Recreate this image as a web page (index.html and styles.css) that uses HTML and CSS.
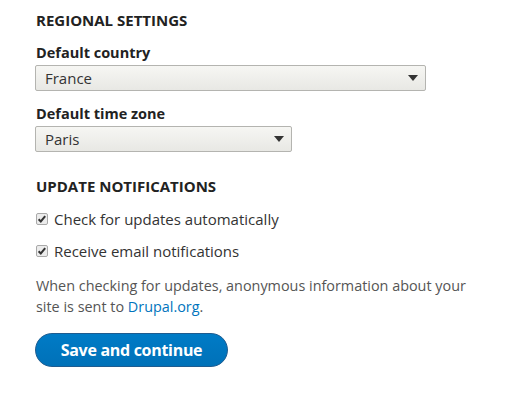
FILE: index.html
```html
<!DOCTYPE html>
<html>
<head>
<meta charset="utf-8">
<link rel="stylesheet" href="styles.css">
</head>
<body>
<form class="form">
  <section class="group">
    <h2 class="group-title">REGIONAL SETTINGS</h2>
    <div class="field">
      <label class="field-label">Default country</label>
      <div class="select select-wide">
        <span class="select-value">France</span>
        <span class="select-arrow"></span>
      </div>
    </div>
    <div class="field">
      <label class="field-label">Default time zone</label>
      <div class="select select-narrow">
        <span class="select-value">Paris</span>
        <span class="select-arrow"></span>
      </div>
    </div>
  </section>
  <section class="group group-updates">
    <h2 class="group-title">UPDATE NOTIFICATIONS</h2>
    <div class="check">
      <svg class="check-box" width="12" height="12" viewBox="0 0 12 12"><rect x="0.5" y="0.5" width="11" height="11" rx="1.5" fill="#ececec" stroke="#a9a9a9"/><path d="M2.6 6.2 L4.8 8.4 L9.2 3.2" fill="none" stroke="#333" stroke-width="2"/></svg>
      <span class="check-label">Check for updates automatically</span>
    </div>
    <div class="check">
      <svg class="check-box" width="12" height="12" viewBox="0 0 12 12"><rect x="0.5" y="0.5" width="11" height="11" rx="1.5" fill="#ececec" stroke="#a9a9a9"/><path d="M2.6 6.2 L4.8 8.4 L9.2 3.2" fill="none" stroke="#333" stroke-width="2"/></svg>
      <span class="check-label">Receive email notifications</span>
    </div>
    <p class="description">When checking for updates, anonymous information about your site is sent to <a class="link" href="#">Drupal.org</a>.</p>
  </section>
  <div class="actions">
    <button type="button" class="button-primary">Save and continue</button>
  </div>
</form>
</body>
</html>
```
FILE: styles.css
```css
html, body {
  margin: 0;
  padding: 0;
  background: #fff;
}
body {
  font-family: "Open Sans", "DejaVu Sans", sans-serif;
  color: #222;
}
.form {
  padding: 10px 0 0 35px;
  width: 450px;
}
.group-title {
  margin: 0 0 0 1px;
  font-size: 15px;
  font-weight: 700;
  line-height: 20px;
  color: #222;
}
.field {
  margin-top: 13px;
}
.field + .field {
  margin-top: 13px;
}
.field-label {
  display: block;
  margin-left: 1px;
  font-size: 14.5px;
  font-weight: 700;
  line-height: 20px;
  color: #222;
}
.select {
  margin-top: 2px;
  box-sizing: border-box;
  height: 26px;
  display: flex;
  align-items: center;
  justify-content: space-between;
  padding: 0 6px 0 9px;
  border: 1px solid #b4b4b0;
  border-radius: 2px;
  background: linear-gradient(#f6f6f3, #e8e8e4);
  font-size: 15px;
  color: #333;
}
.select-wide { width: 391px; }
.select-narrow { width: 257px; }
.select-arrow {
  width: 0;
  height: 0;
  border-left: 5px solid transparent;
  border-right: 5px solid transparent;
  border-top: 6px solid #333;
  margin-right: 1px;
}
.group-updates {
  margin-top: 24px;
}
.check {
  display: flex;
  align-items: center;
  gap: 6px;
  margin-top: 13px;
  height: 20px;
}
.check + .check {
  margin-top: 12px;
}
.check-box {
  flex: none;
  margin-left: 1px;
}
.check-label {
  font-size: 15px;
  color: #333;
}
.description {
  margin: 14px 0 0 1px;
  font-size: 14.4px;
  line-height: 21px;
  color: #555;
}
.link {
  color: #0074bd;
  text-decoration: none;
}
.actions {
  margin-top: 16px;
}
.button-primary {
  box-sizing: border-box;
  width: 193px;
  height: 34px;
  border: 1px solid #1e5c90;
  border-radius: 20px;
  background: linear-gradient(#007bc6, #0071b8);
  color: #fff;
  font-family: "Open Sans", sans-serif;
  font-size: 16px;
  font-weight: 700;
  padding: 0;
  letter-spacing: -0.3px;
}
```
